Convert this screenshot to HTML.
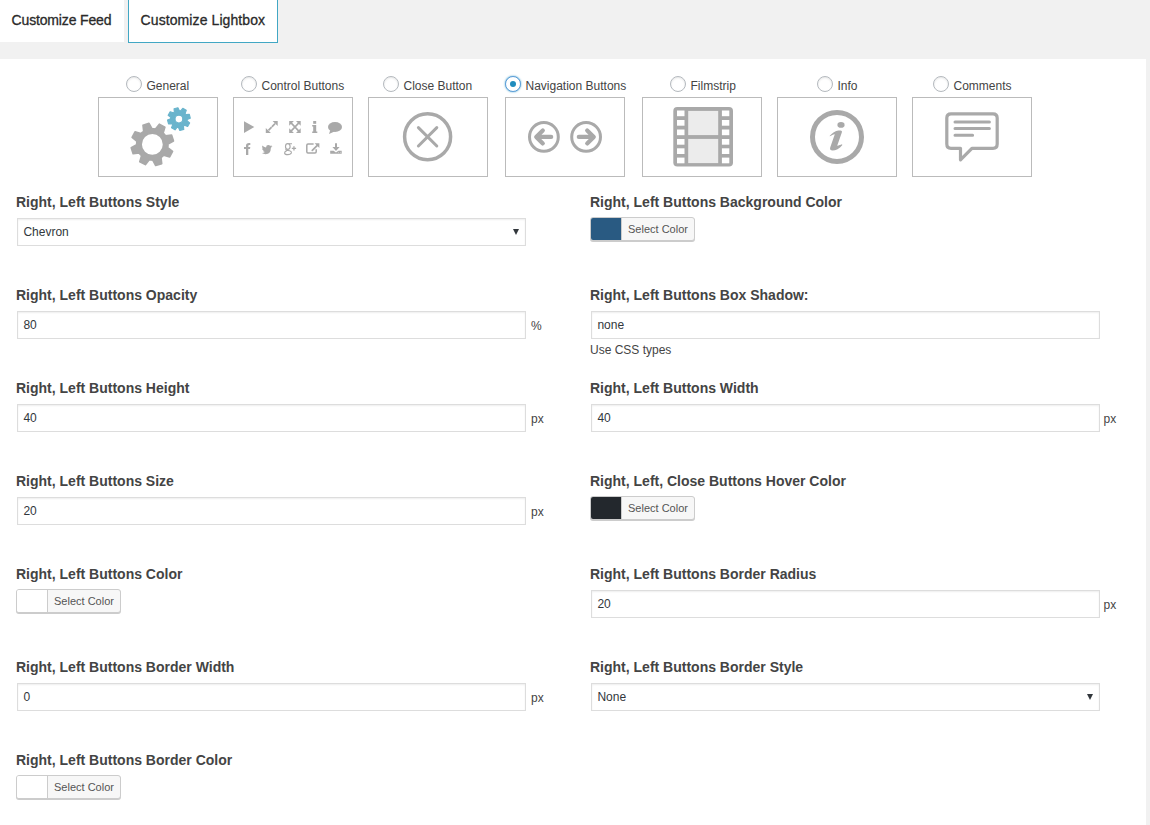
<!DOCTYPE html>
<html><head><meta charset="utf-8"><style>
html,body{margin:0;padding:0;}
body{width:1150px;height:825px;overflow:hidden;background:#f1f1f1;position:relative;font-family:"Liberation Sans", sans-serif;}
.t{position:absolute;white-space:nowrap;}
.radio{position:absolute;width:14px;height:14px;border:1px solid #b4b9be;border-radius:50%;background:#fff;box-shadow:inset 0 1px 2px rgba(0,0,0,.1);}
.radio.checked{border-color:#5b9dd9;box-shadow:0 0 2px rgba(30,140,190,.8);}
.radio.checked::after{content:"";position:absolute;left:4px;top:4px;width:6px;height:6px;border-radius:50%;background:#1e8cbe;}
.box{position:absolute;width:118px;height:78px;border:1px solid #bbb;}
.icons{position:absolute;left:0;top:0;}
.inp{position:absolute;width:507px;height:26px;border:1px solid #ddd;background:#fff;box-shadow:inset 0 1px 2px rgba(0,0,0,.07);}
.arrow{position:absolute;width:0;height:0;border-left:3px solid transparent;border-right:3px solid transparent;border-top:6px solid #32373c;}
.cbtn{position:absolute;height:22px;border:1px solid #ccc;border-radius:3px;background:#f7f7f7;box-shadow:0 1px 0 #ccc;display:flex;overflow:hidden;}
.sw{width:30px;height:22px;}
.cl{border-left:1px solid #ccc;padding:0 6px;font-size:11px;line-height:22px;color:#555;white-space:nowrap;}
</style></head><body>
<div style="position:absolute;left:0;top:0;width:124px;height:42px;background:#fff"></div><div style="position:absolute;left:128px;top:-1px;width:148px;height:42px;background:#fff;border:1px solid #41a7c4"></div><div class="t" style="left:11.6px;top:13.15px;font-size:14px;line-height:14px;font-weight:normal;color:#2a2a2a;letter-spacing:-0.16px;-webkit-text-stroke:0.3px #2a2a2a;">Customize Feed</div><div class="t" style="left:140.6px;top:13.15px;font-size:14px;line-height:14px;font-weight:normal;color:#2a2a2a;letter-spacing:0.09px;-webkit-text-stroke:0.3px #2a2a2a;">Customize Lightbox</div><div style="position:absolute;left:0;top:59px;width:1146px;height:766px;background:#fff"></div><div class="radio" style="left:126px;top:76px"></div><div class="t" style="left:146.5px;top:79.84px;font-size:12px;line-height:12px;font-weight:normal;color:#444;">General</div><div class="radio" style="left:241px;top:76px"></div><div class="t" style="left:261.5px;top:79.84px;font-size:12px;line-height:12px;font-weight:normal;color:#444;">Control Buttons</div><div class="radio" style="left:383px;top:76px"></div><div class="t" style="left:403.5px;top:79.84px;font-size:12px;line-height:12px;font-weight:normal;color:#444;">Close Button</div><div class="radio checked" style="left:505px;top:76px"></div><div class="t" style="left:525.5px;top:79.84px;font-size:12px;line-height:12px;font-weight:normal;color:#444;">Navigation Buttons</div><div class="radio" style="left:670px;top:76px"></div><div class="t" style="left:690.5px;top:79.84px;font-size:12px;line-height:12px;font-weight:normal;color:#444;">Filmstrip</div><div class="radio" style="left:817px;top:76px"></div><div class="t" style="left:837.5px;top:79.84px;font-size:12px;line-height:12px;font-weight:normal;color:#444;">Info</div><div class="radio" style="left:933px;top:76px"></div><div class="t" style="left:953.5px;top:79.84px;font-size:12px;line-height:12px;font-weight:normal;color:#444;">Comments</div><div class="box" style="left:98px;top:97px"></div><div class="box" style="left:233px;top:97px"></div><div class="box" style="left:368px;top:97px"></div><div class="box" style="left:505px;top:97px"></div><div class="box" style="left:642px;top:97px"></div><div class="box" style="left:777px;top:97px"></div><div class="box" style="left:912px;top:97px"></div><svg class="icons" width="1150" height="825" viewBox="0 0 1150 825"><path fill="#a9a9a9" stroke="#a9a9a9" stroke-width="1.6" stroke-linejoin="round" fill-rule="evenodd" d="M153.72,128.76 L155.48,129.02 L159.32,124.17 L164.93,127.09 L163.16,133.01 L164.38,134.31 L165.44,135.73 L171.58,135.02 L173.49,141.05 L168.04,143.99 L167.99,145.77 L167.73,147.53 L172.58,151.37 L169.66,156.98 L163.74,155.21 L162.44,156.43 L161.02,157.49 L161.73,163.63 L155.70,165.54 L152.76,160.09 L150.98,160.04 L149.22,159.78 L145.38,164.63 L139.77,161.71 L141.54,155.79 L140.32,154.49 L139.26,153.07 L133.12,153.78 L131.21,147.75 L136.66,144.81 L136.71,143.03 L136.97,141.27 L132.12,137.43 L135.04,131.82 L140.96,133.59 L142.26,132.37 L143.68,131.31 L142.97,125.17 L149.00,123.26 L151.94,128.71Z M163.55,144.40 A11.2,11.2 0 1 0 141.15,144.40 A11.2,11.2 0 1 0 163.55,144.40Z"/><path fill="#6ab4cc" stroke="#6ab4cc" stroke-width="1.2" stroke-linejoin="round" fill-rule="evenodd" d="M179.98,110.87 L180.63,110.98 L182.80,108.39 L186.23,110.37 L185.07,113.55 L185.48,114.05 L185.86,114.58 L189.23,114.28 L190.26,118.11 L187.19,119.53 L187.13,120.18 L187.02,120.83 L189.61,123.00 L187.63,126.43 L184.45,125.27 L183.95,125.68 L183.42,126.06 L183.72,129.43 L179.89,130.46 L178.47,127.39 L177.82,127.33 L177.17,127.22 L175.00,129.81 L171.57,127.83 L172.73,124.65 L172.32,124.15 L171.94,123.62 L168.57,123.92 L167.54,120.09 L170.61,118.67 L170.67,118.02 L170.78,117.37 L168.19,115.20 L170.17,111.77 L173.35,112.93 L173.85,112.52 L174.38,112.14 L174.08,108.77 L177.91,107.74 L179.33,110.81Z M182.80,119.10 A3.9,3.9 0 1 0 175.00,119.10 A3.9,3.9 0 1 0 182.80,119.10Z"/><circle cx="427.6" cy="136.7" r="23" fill="none" stroke="#a9a9a9" stroke-width="3.5"/><path d="M418.4,127.6 L436.8,146 M436.8,127.6 L418.4,146" stroke="#a9a9a9" stroke-width="3" stroke-linecap="round"/><circle cx="543.9" cy="136.9" r="14.4" fill="none" stroke="#a9a9a9" stroke-width="3"/><path d="M551.20,136.9 L537.20,136.9 M542.80,130.4 L536.20,136.9 L542.80,143.4" fill="none" stroke="#a9a9a9" stroke-width="4.2" stroke-linecap="round" stroke-linejoin="round"/><circle cx="586.1" cy="136.9" r="14.4" fill="none" stroke="#a9a9a9" stroke-width="3"/><path d="M578.80,136.9 L592.80,136.9 M587.20,130.4 L593.80,136.9 L587.20,143.4" fill="none" stroke="#a9a9a9" stroke-width="4.2" stroke-linecap="round" stroke-linejoin="round"/><rect x="673.3" y="107" width="59.7" height="59.6" rx="4" fill="#a9a9a9"/><rect x="688.2" y="110.9" width="30" height="24.2" fill="#ececec"/><rect x="688.2" y="138.9" width="30" height="24.2" fill="#ececec"/><rect x="677" y="110.5" width="7.5" height="5.7" fill="#fff"/><rect x="721.9" y="110.5" width="7.4" height="5.7" fill="#fff"/><rect x="677" y="120.0" width="7.5" height="5.7" fill="#fff"/><rect x="721.9" y="120.0" width="7.4" height="5.7" fill="#fff"/><rect x="677" y="129.5" width="7.5" height="5.7" fill="#fff"/><rect x="721.9" y="129.5" width="7.4" height="5.7" fill="#fff"/><rect x="677" y="139.0" width="7.5" height="5.7" fill="#fff"/><rect x="721.9" y="139.0" width="7.4" height="5.7" fill="#fff"/><rect x="677" y="148.3" width="7.5" height="5.7" fill="#fff"/><rect x="721.9" y="148.3" width="7.4" height="5.7" fill="#fff"/><rect x="677" y="157.6" width="7.5" height="5.7" fill="#fff"/><rect x="721.9" y="157.6" width="7.4" height="5.7" fill="#fff"/><circle cx="837" cy="136.9" r="24.5" fill="none" stroke="#a9a9a9" stroke-width="5"/><ellipse cx="841" cy="124.9" rx="3.6" ry="2.8" fill="#a9a9a9"/><path d="M829.6,135.9 C832,133 835.5,130.5 838.5,130.4 L840.5,130.4 Q842.5,130.6 841.9,132.3 L837.2,145.8 C838.9,145.6 840.7,144.8 841.9,144.3 L842.4,144.9 C839.5,148.5 835.6,150.5 832.6,150.5 C830.4,150.5 829.7,149.2 830.2,147.5 L834.8,134.2 C833.2,134.5 831.3,135.3 829.9,136.3 Z" fill="#a9a9a9"/><path d="M951,113.8 L993,113.8 Q997.2,113.8 997.2,118 L997.2,144 Q997.2,148.3 993,148.3 L971.9,148.3 L960.5,159.8 L960.5,148.3 L951,148.3 Q946.8,148.3 946.8,144 L946.8,118 Q946.8,113.8 951,113.8 Z" fill="none" stroke="#a9a9a9" stroke-width="3.2" stroke-linejoin="round"/><path d="M955,122.1 L989.4,122.1 M955,128.6 L989.4,128.6 M955,135.2 L972.6,135.2" stroke="#a9a9a9" stroke-width="3" stroke-linecap="round"/><path d="M244,121.2 L254.3,127 L244,133 Z" fill="#a9a9a9"/><path d="M272.6,121 L277.7,121 L277.7,126.1 Z M265.8,127.9 L265.8,133 L270.9,133 Z" fill="#a9a9a9"/><path d="M275,123.7 L271.9,126.8 M271.6,127.2 L268.5,130.3" stroke="#a9a9a9" stroke-width="1.7"/><path d="M289.2,121 L293.9,121 L289.2,125.7 Z M300.7,121 L296,121 L300.7,125.7 Z M289.2,133 L293.9,133 L289.2,128.3 Z M300.7,133 L296,133 L300.7,128.3 Z" fill="#a9a9a9"/><path d="M290.6,122.4 L299.3,131.6 M299.3,122.4 L290.6,131.6" stroke="#a9a9a9" stroke-width="1.6"/><rect x="313.2" y="121" width="3" height="2.8" fill="#a9a9a9"/><path d="M312.2,125 L316.2,125 L316.2,131.4 L317.3,131.4 L317.3,133 L312.2,133 L312.2,131.4 L313.2,131.4 L313.2,126.6 L312.2,126.6 Z" fill="#a9a9a9"/><ellipse cx="335" cy="127" rx="7" ry="5" fill="#a9a9a9"/><path d="M330.5,129.5 L329,134 L334.5,131.5 Z" fill="#a9a9a9"/><path d="M246,155 L246,149 L244,149 L244,147 L246,147 L246,145.5 Q246,143 249,143 L250.3,143 L250.3,145 L249.3,145 Q248.3,145 248.3,146 L248.3,147 L250.3,147 L250,149 L248.3,149 L248.3,155 Z" fill="#a9a9a9"/><path d="M272.4,146 Q271.5,146.4 270.8,146.5 Q271.6,146 271.9,145.2 Q271,145.7 270.2,145.8 Q269.4,145 268.3,145 Q266.2,145 266,147.4 Q263.8,147.3 262.3,145.5 Q261.6,147.3 263,148.6 Q262.4,148.6 262,148.3 Q262,150 263.8,150.5 Q263.3,150.7 262.8,150.6 Q263.3,152 264.9,152.1 Q263.6,153.2 261.8,153.1 Q263.4,154.2 265.6,154.2 Q270.8,154.2 270.9,147.8 Q271.8,147.1 272.4,146 Z" fill="#a9a9a9"/><g fill="none" stroke="#a9a9a9" stroke-width="1.15"><ellipse cx="287.8" cy="146.5" rx="2.3" ry="2.9"/><path d="M288.6,143.7 L292,143.7 M286.3,148.9 Q285.2,149.8 286.6,150.3 L289.5,150.8 Q291.7,151.3 291.3,152.9 Q290.8,154.6 287.8,154.6 Q284.6,154.6 284.6,152.9 Q284.6,151.4 286.8,150.6"/></g><path d="M291.8,148.4 L296.1,148.4 M293.95,146.2 L293.95,150.6" stroke="#a9a9a9" stroke-width="1.3"/><path d="M313.6,144 L308,144 Q306.8,144 306.8,145.2 L306.8,151.8 Q306.8,153 308,153 L315,153 Q316.2,153 316.2,151.8 L316.2,149.3" fill="none" stroke="#a9a9a9" stroke-width="1.5"/><path d="M314.6,143.2 L319.4,143.2 L319.4,148 Z" fill="#a9a9a9"/><path d="M317.6,145.2 L312.3,150.4" stroke="#a9a9a9" stroke-width="1.8" stroke-linecap="round"/><path d="M335,143.2 L337,143.2 L337,147.1 L339.6,147.1 L336,151 L332.4,147.1 L335,147.1 Z" fill="#a9a9a9"/><path d="M330.2,150.7 L333.6,150.7 L336,152.4 L338.4,150.7 L341.7,150.7 L341.7,153.8 L330.2,153.8 Z" fill="#a9a9a9"/><rect x="338.1" y="151.9" width="0.8" height="0.8" fill="#ddd"/><rect x="340" y="151.9" width="0.8" height="0.8" fill="#ddd"/></svg><div class="t" style="left:16px;top:195.15px;font-size:14px;line-height:14px;font-weight:bold;color:#444;">Right, Left Buttons Style</div><div class="inp" style="left:17px;top:218px"></div><div class="t" style="left:23.4px;top:225.84px;font-size:12px;line-height:12px;font-weight:normal;color:#32373c;">Chevron</div><div class="arrow" style="left:513px;top:229px"></div><div class="t" style="left:590px;top:195.15px;font-size:14px;line-height:14px;font-weight:bold;color:#444;">Right, Left Buttons Background Color</div><div class="cbtn" style="left:590px;top:217px"><div class="sw" style="background:#295a82"></div><div class="cl">Select Color</div></div><div class="t" style="left:16px;top:288.15px;font-size:14px;line-height:14px;font-weight:bold;color:#444;">Right, Left Buttons Opacity</div><div class="inp" style="left:17px;top:311px"></div><div class="t" style="left:23.4px;top:318.84px;font-size:12px;line-height:12px;font-weight:normal;color:#32373c;">80</div><div class="t" style="left:531.0px;top:319.64px;font-size:12px;line-height:12px;font-weight:normal;color:#444;">%</div><div class="t" style="left:590px;top:288.15px;font-size:14px;line-height:14px;font-weight:bold;color:#444;">Right, Left Buttons Box Shadow:</div><div class="inp" style="left:591px;top:311px"></div><div class="t" style="left:597.4px;top:318.84px;font-size:12px;line-height:12px;font-weight:normal;color:#32373c;">none</div><div class="t" style="left:16px;top:381.15px;font-size:14px;line-height:14px;font-weight:bold;color:#444;">Right, Left Buttons Height</div><div class="inp" style="left:17px;top:404px"></div><div class="t" style="left:23.4px;top:411.84px;font-size:12px;line-height:12px;font-weight:normal;color:#32373c;">40</div><div class="t" style="left:531.0px;top:412.64px;font-size:12px;line-height:12px;font-weight:normal;color:#444;">px</div><div class="t" style="left:590px;top:381.15px;font-size:14px;line-height:14px;font-weight:bold;color:#444;">Right, Left Buttons Width</div><div class="inp" style="left:591px;top:404px"></div><div class="t" style="left:597.4px;top:411.84px;font-size:12px;line-height:12px;font-weight:normal;color:#32373c;">40</div><div class="t" style="left:1103.6px;top:412.64px;font-size:12px;line-height:12px;font-weight:normal;color:#444;">px</div><div class="t" style="left:16px;top:474.15px;font-size:14px;line-height:14px;font-weight:bold;color:#444;">Right, Left Buttons Size</div><div class="inp" style="left:17px;top:497px"></div><div class="t" style="left:23.4px;top:504.84px;font-size:12px;line-height:12px;font-weight:normal;color:#32373c;">20</div><div class="t" style="left:531.0px;top:505.64px;font-size:12px;line-height:12px;font-weight:normal;color:#444;">px</div><div class="t" style="left:590px;top:474.15px;font-size:14px;line-height:14px;font-weight:bold;color:#444;">Right, Left, Close Buttons Hover Color</div><div class="cbtn" style="left:590px;top:496px"><div class="sw" style="background:#23282d"></div><div class="cl">Select Color</div></div><div class="t" style="left:16px;top:567.15px;font-size:14px;line-height:14px;font-weight:bold;color:#444;">Right, Left Buttons Color</div><div class="cbtn" style="left:16px;top:589px"><div class="sw" style="background:#fff"></div><div class="cl">Select Color</div></div><div class="t" style="left:590px;top:567.15px;font-size:14px;line-height:14px;font-weight:bold;color:#444;">Right, Left Buttons Border Radius</div><div class="inp" style="left:591px;top:590px"></div><div class="t" style="left:597.4px;top:597.84px;font-size:12px;line-height:12px;font-weight:normal;color:#32373c;">20</div><div class="t" style="left:1103.6px;top:598.64px;font-size:12px;line-height:12px;font-weight:normal;color:#444;">px</div><div class="t" style="left:16px;top:660.15px;font-size:14px;line-height:14px;font-weight:bold;color:#444;">Right, Left Buttons Border Width</div><div class="inp" style="left:17px;top:683px"></div><div class="t" style="left:23.4px;top:690.84px;font-size:12px;line-height:12px;font-weight:normal;color:#32373c;">0</div><div class="t" style="left:531.0px;top:691.64px;font-size:12px;line-height:12px;font-weight:normal;color:#444;">px</div><div class="t" style="left:590px;top:660.15px;font-size:14px;line-height:14px;font-weight:bold;color:#444;">Right, Left Buttons Border Style</div><div class="inp" style="left:591px;top:683px"></div><div class="t" style="left:597.4px;top:690.84px;font-size:12px;line-height:12px;font-weight:normal;color:#32373c;">None</div><div class="arrow" style="left:1087px;top:694px"></div><div class="t" style="left:16px;top:753.15px;font-size:14px;line-height:14px;font-weight:bold;color:#444;">Right, Left Buttons Border Color</div><div class="cbtn" style="left:16px;top:775px"><div class="sw" style="background:#fff"></div><div class="cl">Select Color</div></div><div class="t" style="left:590px;top:343.84px;font-size:12px;line-height:12px;font-weight:normal;color:#444;">Use CSS types</div>
</body></html>
